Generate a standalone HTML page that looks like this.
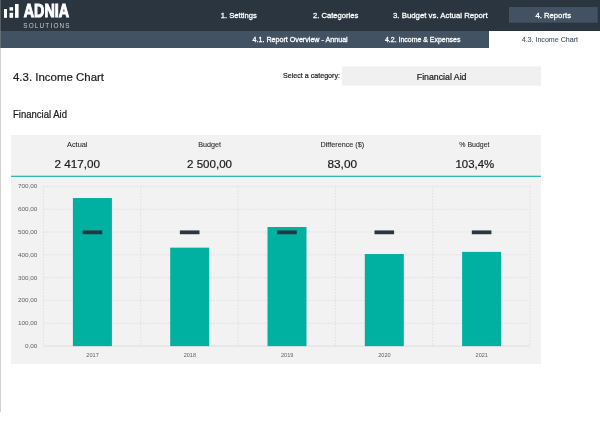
<!DOCTYPE html>
<html lang="en">
<head>
<meta charset="utf-8">
<title>4.3. Income Chart</title>
<style>
  html, body { margin: 0; padding: 0; background: #ffffff; }
  body { width: 600px; height: 436px; overflow: hidden; position: relative;
         font-family: "Liberation Sans", sans-serif; }
  #page { position: absolute; left: 0; top: 0; width: 600px; height: 436px; will-change: transform; background: #ffffff; }
  svg { position: absolute; left: 0; top: 0; display: block; }
  text { font-family: "Liberation Sans", sans-serif; fill: #1c1c1c; stroke: #1c1c1c; stroke-width: 0.22; white-space: pre; }
  .w { fill: #ffffff; stroke: #ffffff; stroke-width: 0.28; }
  .g { fill: #5f5f5f; stroke: none; }
  .on { fill: #435262; stroke: #435262; stroke-width: 0.1; }
  .k { fill: #2a2a2a; stroke: #2a2a2a; stroke-width: 0.08; }
</style>
</head>
<body>
<div id="page">
<svg width="600" height="436" viewBox="0 0 600 436">
  <!-- header bands -->
  <rect x="0" y="0" width="600" height="48" fill="#2b3540"/>
  <rect x="0" y="31" width="600" height="17" fill="#435262"/>
  <rect x="489" y="31" width="111" height="17" fill="#ffffff"/>
  <rect x="509" y="7" width="88.7" height="15.7" fill="#435262"/>

  <!-- logo -->
  <g fill="#ffffff">
    <rect x="4" y="9" width="3" height="8.8"/>
    <rect x="9.5" y="7.2" width="3.6" height="3.4"/>
    <rect x="9.5" y="12.8" width="3.6" height="5"/>
    <rect x="15" y="4" width="3.6" height="13.8"/>
  </g>
  <text x="23.8" y="17.1" textLength="45.2" lengthAdjust="spacingAndGlyphs" font-size="17.7" font-weight="bold" class="w" style="stroke:#ffffff;stroke-width:1;stroke-linejoin:miter">ADNIA</text>
  <text x="23.2" y="27.7" textLength="46.4" lengthAdjust="spacing" font-size="6.4" style="fill:#c5c9cd;stroke:none">SOLUTIONS</text>

  <!-- top navigation -->
  <text x="220.8" y="18" textLength="35.9" lengthAdjust="spacingAndGlyphs" font-size="8.1" class="w">1. Settings</text>
  <text x="313" y="18" textLength="45.3" lengthAdjust="spacingAndGlyphs" font-size="8.1" class="w">2. Categories</text>
  <text x="393" y="18" textLength="94.6" lengthAdjust="spacingAndGlyphs" font-size="8.1" class="w">3. Budget vs. Actual Report</text>
  <text x="535.4" y="18" textLength="35.6" lengthAdjust="spacingAndGlyphs" font-size="8.1" class="w">4. Reports</text>
  <!-- sub navigation -->
  <text x="252.5" y="42.4" textLength="95.2" lengthAdjust="spacingAndGlyphs" font-size="7.2" class="w">4.1. Report Overview - Annual</text>
  <text x="385" y="42.4" textLength="75.4" lengthAdjust="spacingAndGlyphs" font-size="7.2" class="w">4.2. Income &amp; Expenses</text>
  <text x="521.7" y="42.2" textLength="56.3" lengthAdjust="spacingAndGlyphs" font-size="7.2" class="on">4.3. Income Chart</text>
  <!-- title row -->
  <text x="13" y="81" textLength="91" lengthAdjust="spacingAndGlyphs" font-size="11.7">4.3. Income Chart</text>
  <rect x="342" y="66.4" width="199" height="19.3" fill="#f0f0f0"/>
  <text x="283" y="78.4" textLength="57" lengthAdjust="spacingAndGlyphs" font-size="8">Select a category:</text>
  <text x="416.8" y="79.7" textLength="49.7" lengthAdjust="spacingAndGlyphs" font-size="8.7">Financial Aid</text>
  <text x="13" y="118" textLength="54" lengthAdjust="spacingAndGlyphs" font-size="10.3">Financial Aid</text>
  <!-- panel -->
  <rect x="11" y="135" width="530" height="228.8" fill="#f2f2f2"/>
  <rect x="11" y="175.7" width="530" height="1.3" fill="#35b8a9"/>
  <text x="67" y="147" textLength="20.5" lengthAdjust="spacingAndGlyphs" font-size="7.3" class="k">Actual</text>
  <text x="54.5" y="167.5" textLength="45.5" lengthAdjust="spacingAndGlyphs" font-size="11.5">2 417,00</text>
  <text x="198.3" y="147" textLength="22.7" lengthAdjust="spacingAndGlyphs" font-size="7.3" class="k">Budget</text>
  <text x="187" y="167.5" textLength="45" lengthAdjust="spacingAndGlyphs" font-size="11.5">2 500,00</text>
  <text x="320.5" y="147" textLength="43.7" lengthAdjust="spacingAndGlyphs" font-size="7.3" class="k">Difference ($)</text>
  <text x="327.5" y="167.5" textLength="29.5" lengthAdjust="spacingAndGlyphs" font-size="11.5">83,00</text>
  <text x="459.3" y="147" textLength="30.2" lengthAdjust="spacingAndGlyphs" font-size="7.3" class="k">% Budget</text>
  <text x="455.5" y="167.5" textLength="38.7" lengthAdjust="spacingAndGlyphs" font-size="11.5">103,4%</text>
  <!-- chart grid -->
  <g stroke="#d6d6d6" stroke-width="0.6" stroke-dasharray="1.9 1.3" fill="none">
    <line x1="43.5" y1="186.40" x2="530.0" y2="186.40"/>
    <line x1="43.5" y1="209.21" x2="530.0" y2="209.21"/>
    <line x1="43.5" y1="232.03" x2="530.0" y2="232.03"/>
    <line x1="43.5" y1="254.84" x2="530.0" y2="254.84"/>
    <line x1="43.5" y1="277.66" x2="530.0" y2="277.66"/>
    <line x1="43.5" y1="300.47" x2="530.0" y2="300.47"/>
    <line x1="43.5" y1="323.29" x2="530.0" y2="323.29"/>
    <line x1="43.50" y1="186.4" x2="43.50" y2="346.1"/>
    <line x1="140.80" y1="186.4" x2="140.80" y2="346.1"/>
    <line x1="238.10" y1="186.4" x2="238.10" y2="346.1"/>
    <line x1="335.40" y1="186.4" x2="335.40" y2="346.1"/>
    <line x1="432.70" y1="186.4" x2="432.70" y2="346.1"/>
    <line x1="530.00" y1="186.4" x2="530.00" y2="346.1"/>
  </g>
  <line x1="43.5" y1="346.1" x2="530.0" y2="346.1" stroke="#d9d9d9" stroke-width="0.8"/>
  <!-- bars -->
  <g fill="#00b0a0">
    <rect x="72.90" y="198.04" width="39.0" height="148.06"/>
    <rect x="170.20" y="247.66" width="39.0" height="98.44"/>
    <rect x="267.50" y="227.01" width="39.0" height="119.09"/>
    <rect x="364.80" y="254.04" width="39.0" height="92.06"/>
    <rect x="462.10" y="251.88" width="39.0" height="94.22"/>
  </g>
  <g fill="#2b3540">
    <rect x="82.60" y="230.43" width="19.6" height="3.8"/>
    <rect x="179.90" y="230.43" width="19.6" height="3.8"/>
    <rect x="277.20" y="230.43" width="19.6" height="3.8"/>
    <rect x="374.50" y="230.43" width="19.6" height="3.8"/>
    <rect x="471.80" y="230.43" width="19.6" height="3.8"/>
  </g>
  <!-- axis labels -->
  <text x="17.9" y="188.3" textLength="19.4" lengthAdjust="spacingAndGlyphs" font-size="6.2" class="g">700,00</text>
  <text x="17.9" y="211.114" textLength="19.4" lengthAdjust="spacingAndGlyphs" font-size="6.2" class="g">600,00</text>
  <text x="17.9" y="233.929" textLength="19.4" lengthAdjust="spacingAndGlyphs" font-size="6.2" class="g">500,00</text>
  <text x="17.9" y="256.743" textLength="19.4" lengthAdjust="spacingAndGlyphs" font-size="6.2" class="g">400,00</text>
  <text x="17.9" y="279.557" textLength="19.4" lengthAdjust="spacingAndGlyphs" font-size="6.2" class="g">300,00</text>
  <text x="17.9" y="302.371" textLength="19.4" lengthAdjust="spacingAndGlyphs" font-size="6.2" class="g">200,00</text>
  <text x="17.9" y="325.186" textLength="19.4" lengthAdjust="spacingAndGlyphs" font-size="6.2" class="g">100,00</text>
  <text x="24.9" y="348" textLength="12.4" lengthAdjust="spacingAndGlyphs" font-size="6.2" class="g">0,00</text>
  <text x="86.35" y="356.8" textLength="12.4" lengthAdjust="spacingAndGlyphs" font-size="5.7" class="g">2017</text>
  <text x="183.65" y="356.8" textLength="12.4" lengthAdjust="spacingAndGlyphs" font-size="5.7" class="g">2018</text>
  <text x="280.95" y="356.8" textLength="12.4" lengthAdjust="spacingAndGlyphs" font-size="5.7" class="g">2019</text>
  <text x="378.25" y="356.8" textLength="12.4" lengthAdjust="spacingAndGlyphs" font-size="5.7" class="g">2020</text>
  <text x="475.55" y="356.8" textLength="12.4" lengthAdjust="spacingAndGlyphs" font-size="5.7" class="g">2021</text>
  <!-- left edge line -->
  <rect x="0" y="0" width="1" height="412.2" fill="#959595" fill-opacity="0.43"/>
</svg>
</div>
</body>
</html>
